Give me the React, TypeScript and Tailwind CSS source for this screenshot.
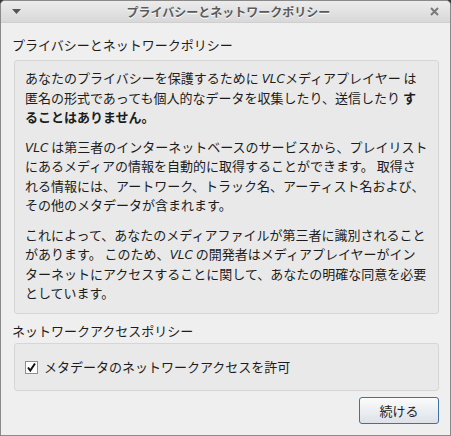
import React from "react";

const jp = { fontFamily: '"Noto Sans CJK JP", "Noto Sans", sans-serif' };

function V() {
  return <span className="italic leading-none" style={{ fontFamily: '"DejaVu Sans", sans-serif', fontSize: "12px" }}>VLC</span>;
}

export default function App() {
  return (
    <div className="w-[451px] h-[436px] bg-[#3a3a3a]" style={jp}>
      <div className="w-[451px] h-[436px] rounded-t-[5px] border border-[#8a8a8a] bg-[#efefef] flex flex-col overflow-hidden">
        {/* title bar */}
        <div className="h-[22px] shrink-0 flex items-center justify-between px-[10px] bg-gradient-to-b from-[#ececec] to-[#d8d8d8] border-b border-[#cfcfcf]">
          <svg width="9" height="6" viewBox="0 0 9 6" className="ml-[1px] mt-[1px]">
            <polygon points="0,0 9,0 4.5,5" fill="#555" />
          </svg>
          <div className="text-[12px] font-bold text-[#5a5a5a] leading-[22px] [text-shadow:0_1px_0_#fff] ml-[6px]">
            プライバシーとネットワークポリシー
          </div>
          <svg width="9" height="9" viewBox="0 0 9 9" className="mr-[1px]">
            <path d="M1 1 L8 8 M8 1 L1 8" stroke="#7a7a7a" strokeWidth="2" />
          </svg>
        </div>

        {/* body */}
        <div className="flex flex-col pl-[11px] pr-[11px] text-[13px] text-[#1c1c1c]">
          <div className="mt-[12px] h-[19px] leading-[19px] whitespace-nowrap">プライバシーとネットワークポリシー</div>
          <div className="mt-[6px] ml-[2px] h-[254px] rounded-[3px] border border-[#d6d6d6] bg-[#e9e9e9] pl-[10px] pt-[7px] leading-[19.5px] whitespace-nowrap">
            <p>
              あなたのプライバシーを保護するために <V />メディアプレイヤー は
              <br />
              匿名の形式であっても個人的なデータを収集したり、送信したり <b>す</b>
              <br />
              <b>ることはありません。</b>
            </p>
            <p className="mt-[10px]">
              <V /> は第三者のインターネットベースのサービスから、プレイリスト
              <br />
              にあるメディアの情報を自動的に取得することができます。 取得さ
              <br />
              れる情報には、アートワーク、トラック名、アーティスト名および、
              <br />
              その他のメタデータが含まれます。
            </p>
            <p className="mt-[10px]">
              これによって、あなたのメディアファイルが第三者に識別されること
              <br />
              があります。 このため、<V /> の開発者はメディアプレイヤーがイン
              <br />
              ターネットにアクセスすることに関して、あなたの明確な同意を必要
              <br />
              としています。
            </p>
          </div>

          <div className="mt-[7px] h-[19px] leading-[19px] whitespace-nowrap">ネットワークアクセスポリシー</div>
          <div className="mt-[3px] ml-[2px] h-[48px] rounded-[3px] border border-[#d6d6d6] bg-[#e9e9e9] flex items-center pl-[10px]">
            <div className="w-[13px] h-[13px] bg-white border border-[#8f8f8f] flex items-center justify-center">
              <svg width="11" height="11" viewBox="0 0 11 11">
                <path d="M2 5.5 L4.3 8.5 L9 1.5" stroke="#111" strokeWidth="2" fill="none" />
              </svg>
            </div>
            <span className="ml-[6px] whitespace-nowrap">メタデータのネットワークアクセスを許可</span>
          </div>

          <div className="flex justify-end mt-[6px]">
            <button className="w-[80px] h-[27px] rounded-[3px] border border-[#3f729f] bg-gradient-to-b from-[#fbfbfb] to-[#dde2e9] text-[13px] text-[#1c1c1c] leading-none">
              続ける
            </button>
          </div>
        </div>
      </div>
    </div>
  );
}
